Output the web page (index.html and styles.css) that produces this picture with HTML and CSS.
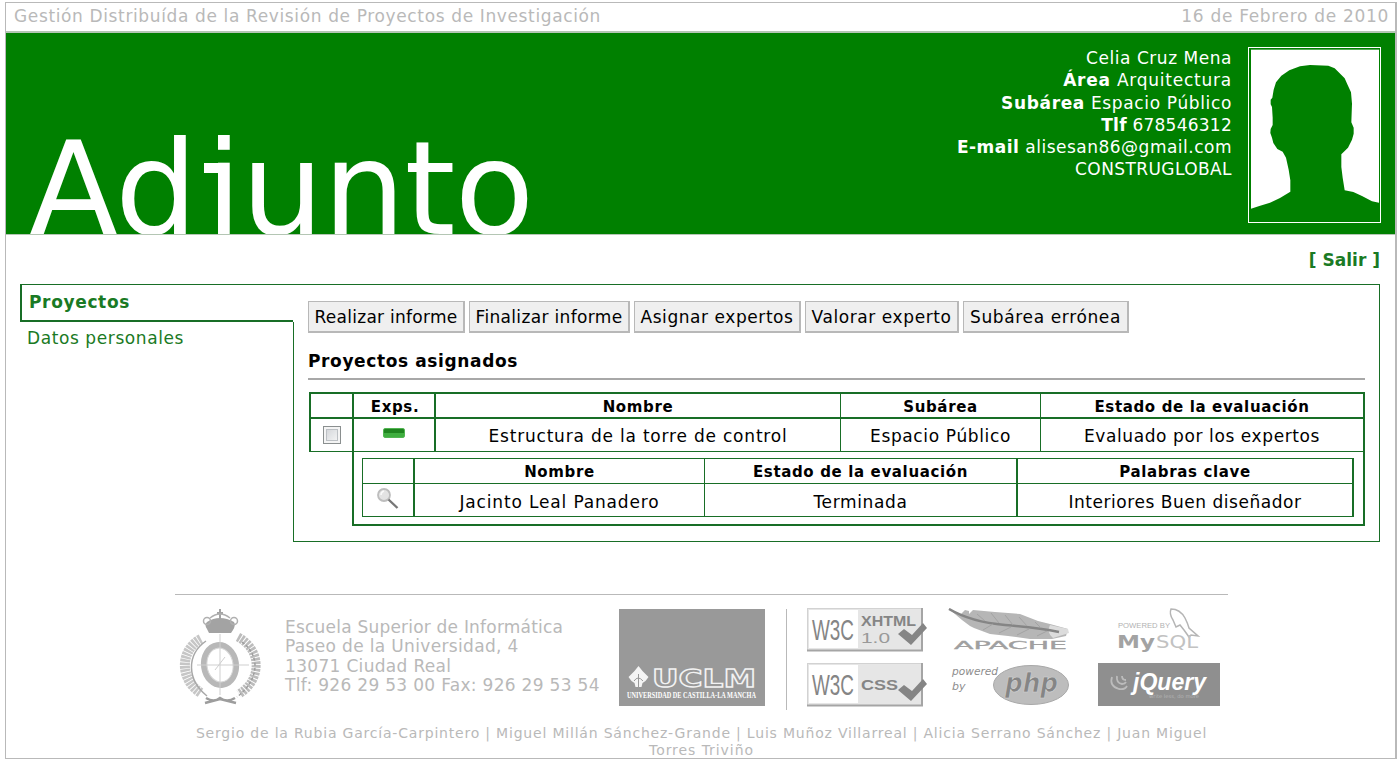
FILE: index.html
```html
<!DOCTYPE html>
<html lang="es">
<head>
<meta charset="utf-8">
<title>Gestión Distribuída de la Revisión de Proyectos de Investigación</title>
<link rel="stylesheet" href="styles.css">
</head>
<body>
<div class="frame">
  <div class="topbar"><span class="t-title">Gestión Distribuída de la Revisión de Proyectos de Investigación</span><span class="t-date">16 de Febrero de 2010</span></div>
  <header class="banner">
    <h1>Ad<span class="jota">j</span>unto</h1>
    <div class="user">
      <div class="u1">Celia Cruz Mena</div>
      <div class="u2"><b>Área</b> Arquitectura</div>
      <div class="u3"><b>Subárea</b> Espacio Público</div>
      <div class="u4"><b>Tlf</b> 678546312</div>
      <div class="u5"><b>E-mail</b> alisesan86@gmail.com</div>
      <div class="u6">CONSTRUGLOBAL</div>
    </div>
    <svg class="photo" viewBox="24 20 399 528" preserveAspectRatio="none">
      <rect x="33" y="28" width="384" height="518" fill="#fff"/>
      <path fill="#008000" d="M33 505 L58 497 90 487 120 473 151 454 151 420 146 388 138 352 128 334 112 326 100 308 96 292 91 278 92 266 98 254 98 232 96 200 92 192 92 178 97 172 101 148 108 126 124 106 148 90 180 78 210 74 265 76 284 84 302 102 314 114 322 132 333 156 336 190 334 246 341 262 341 280 336 298 324 322 304 342 304 380 308 412 314 450 340 455 366 467 396 483 417 487 V546 H33Z"/>
      <rect x="25.500" y="21.500" width="396" height="525" fill="none" stroke="#fff" stroke-width="3"/>
    </svg>
  </header>
  <div class="exit"><a>[ Salir ]</a></div>
  <div class="main">
    <nav class="menu">
      <div class="tab">Proyectos</div>
      <div class="item">Datos personales</div>
    </nav>
    <section class="panel">
      <div class="buttons">
        <button class="b1">Realizar informe</button>
        <button class="b2">Finalizar informe</button>
        <button class="b3">Asignar expertos</button>
        <button class="b4">Valorar experto</button>
        <button class="b5">Subárea errónea</button>
      </div>
      <h2>Proyectos asignados</h2>
      <div class="grid outer">
        <div class="th"></div><div class="th exps">Exps.</div><div class="th">Nombre</div><div class="th">Subárea</div><div class="th">Estado de la evaluación</div>
        <div class="td"><span class="check"></span></div>
        <div class="td"><span class="minus"></span></div>
        <div class="td c1">Estructura de la torre de control</div><div class="td c2">Espacio Público</div><div class="td c3">Evaluado por los expertos</div>
      </div>
      <div class="nested">
        <div class="grid inner">
          <div class="th"></div><div class="th">Nombre</div><div class="th">Estado de la evaluación</div><div class="th">Palabras clave</div>
          <div class="td"><svg class="lens" viewBox="0 0 24 24"><circle cx="8" cy="8" r="6" fill="#e3e3e3" stroke="#bdbdbd" stroke-width="1.800"/><path d="M5 8q0-3 3-4" stroke="#fafafa" stroke-width="1.500" fill="none"/><path d="M12.500 12.500L21.500 21" stroke="#777" stroke-width="2.400"/></svg></div>
          <div class="td c4">Jacinto Leal Panadero</div><div class="td c5">Terminada</div><div class="td c6">Interiores Buen diseñador</div>
        </div>
      </div>
    </section>
  </div>
  <footer class="footer">
    <div class="logos">
      <svg class="crest" viewBox="0 0 84 100">
        <g fill="#a3a3a3"><path d="M28 14q6-4 13-4t14 4q2 3-1 8l-2 3H30l-2-4q-3-4 0-7z"/><path d="M40 1h2v3h2v2h-2v5h-2V6h-2V4h2z"/></g>
        <g fill="none" stroke="#b0b0b0" stroke-width="1.500"><circle cx="28" cy="13" r="3.500"/><circle cx="55" cy="13" r="3.500"/><path d="M31 10q10-8 20 0"/></g>
        <path d="M22 31C1 42 0 71 22 85" stroke="#c6c6c6" stroke-width="10" stroke-dasharray="2.500 0.800" fill="none"/>
        <path d="M27 33C7 47 8 72 28 88" stroke="#a8a8a8" stroke-width="1.500" fill="none"/>
        <path d="M59 29C83 42 83 72 60 86" stroke="#bcbcbc" stroke-width="9" stroke-dasharray="2.500 1" fill="none"/>
        <path d="M63 34C82 48 80 72 58 89" stroke="#9e9e9e" stroke-width="1.500" stroke-dasharray="3 2" fill="none"/>
        <ellipse cx="41" cy="57" rx="16" ry="20" fill="none" stroke="#b8b8b8" stroke-width="6" transform="rotate(-8 41 57)"/>
        <ellipse cx="41" cy="57" rx="13" ry="17" fill="none" stroke="#d8d8d8" transform="rotate(-8 41 57)"/>
        <path d="M41 26V87M18 57H70M36 62l10-13" stroke="#cfcfcf" fill="none"/>
        <path d="M27 90q8 5 14 0q7 5 15 0M26 95l15-4 16 4" stroke="#9d9d9d" stroke-width="2.500" fill="none"/>
      </svg>
      <address>
        <div>Escuela Superior de Informática</div>
        <div class="a2">Paseo de la Universidad, 4</div>
        <div class="a3">13071 Ciudad Real</div>
        <div class="a4">Tlf: 926 29 53 00 Fax: 926 29 53 54</div>
      </address>
      <svg class="uclm" viewBox="0 0 146 97">
        <rect width="146" height="97" fill="#999"/>
        <path d="M19.500 57l4 5 6 6-3 4-3 2-1 4h-6l-1-4-3-2-3-4 6-6z" fill="#f4f4f4"/><path d="M19.500 65v13M15 72q4-6 9 0" stroke="#999" fill="none"/>
        <text x="33" y="78" textLength="104" lengthAdjust="spacingAndGlyphs" class="uclm-name">UCLM</text>
        <text x="8" y="89" textLength="129" lengthAdjust="spacingAndGlyphs" class="uclm-sub">UNIVERSIDAD DE CASTILLA-LA MANCHA</text>
      </svg>
      <div class="rule"></div>
      <svg class="badges" viewBox="0 0 420 100">
        <defs>
          <g id="w3c"><rect x="0.500" y="0.500" width="114" height="42" fill="#e6e6e6" stroke="#d2d2d2"/><rect x="2" y="2" width="49" height="38" fill="#fff"/><path d="M0 42.500H115V0" stroke="#a5a5a5" stroke-width="2" fill="none"/><text x="5" y="32" textLength="42" lengthAdjust="spacingAndGlyphs" class="w3">W3C</text></g>
          <path id="tick" d="M0 11l6-5 8 6L25 0l4 5-16 17z" fill="#858585"/>
        </defs>
        <use href="#w3c"/><text x="54" y="18" textLength="55" lengthAdjust="spacingAndGlyphs" class="bd">XHTML</text><text x="54" y="35" textLength="29" lengthAdjust="spacingAndGlyphs" class="bd light">1.0</text><use href="#tick" x="91" y="15"/>
        <use href="#w3c" y="55"/><text x="54" y="82" textLength="37" lengthAdjust="spacingAndGlyphs" class="bd">CSS</text><use href="#tick" x="91" y="71"/>
        <path d="M142 1l12 5 4-4 4 1 0 3 4-4 22 2 25 2 18 7 12 3 18 5-2 7-14 3-22 0-22-3-18-2-16-6-4-2-8-6z" fill="#b6b6b6"/>
        <path d="M243 17l18 4 1 4-16 5q-7-6-3-13z" fill="#dcdcdc"/>
        <path d="M142 1q22 13 56 16t54 7" stroke="#858585" stroke-width="2.500" fill="none"/>
        <path d="M170 6l8 7M184 5l8 10M198 7l8 10M212 9l8 9M228 14l6 6M176 22l10-6M192 25l12-6M210 27l12-6M230 28l10-5" stroke="#a3a3a3" fill="none"/>
        <text x="147" y="41" textLength="113" lengthAdjust="spacingAndGlyphs" class="apache">APACHE</text>
        <text x="145" y="67" textLength="46" lengthAdjust="spacingAndGlyphs" class="pow">powered</text><text x="145" y="82" class="pow">by</text>
        <ellipse cx="224" cy="77" rx="37.500" ry="19.500" fill="#bdbdbd" stroke="#a8a8a8"/>
        <text x="198" y="84" textLength="53" lengthAdjust="spacingAndGlyphs" class="php">php</text>
        <path d="M369 19l-3-7q-4-6-2-11q9 0 14 9q3 6 4 10l9 8-7-1-2 2-5-7-4-5z" fill="#fff" stroke="#b5b5b5" stroke-width="1.500"/>
        <text x="311" y="20" textLength="52" lengthAdjust="spacingAndGlyphs" class="mypow">POWERED BY</text>
        <text x="310" y="40" textLength="38" lengthAdjust="spacingAndGlyphs" class="mysql">My</text><text x="349" y="40" textLength="42" lengthAdjust="spacingAndGlyphs" class="mysql sql">SQL</text>
        <rect x="291" y="55" width="122" height="43" fill="#8f8f8f"/>
        <path d="M305 69q-3 9 7 12q6 1 8-3M310 68q-1 7 5 8q3 0 4-2M315 68q0 4 4 4" stroke="#bcbcbc" stroke-width="1.800" fill="none"/>
        <text x="326" y="82" textLength="73" lengthAdjust="spacingAndGlyphs" class="jq">jQuery</text>
        <text x="342" y="90" textLength="50" lengthAdjust="spacingAndGlyphs" class="jqs">write less, do more</text>
      </svg>
    </div>
    <div class="authors"><div>Sergio de la Rubia García-Carpintero | Miguel Millán Sánchez-Grande | Luis Muñoz Villarreal | Alicia Serrano Sánchez | Juan Miguel</div><div class="f2">Torres Triviño</div></div>
  </footer>
</div>
</body>
</html>
```

FILE: styles.css
```css
* { box-sizing: border-box; }
body { margin: 0; padding: 2px 1px 0 5px; background: #fff; color: #000; font: 17px/22px "DejaVu Sans", Verdana, sans-serif; }
.frame { width: 1392px; height: 757px; border: 1px solid #b9b9b9; border-right-width: 2px; }

/* Top bar and banner */
.topbar { display: flex; justify-content: space-between; height: 30px; padding: 2px 6px 0 8px; border-bottom: 2px solid #b4c6b4; color: #b9b9b9; white-space: nowrap; }
.t-title { letter-spacing: 0.632px; }
.t-date { letter-spacing: 0.690px; }
.banner { display: flex; align-items: flex-start; height: 202px; padding: 14px 14px 0 0; background: #008000; color: #fff; border-bottom: 1px solid #b4c6b4; }
.banner h1 { flex: none; width: 560px; height: 187px; margin: 0; padding: 41px 0 0 23px; overflow: hidden; font-size: 130px; font-weight: 400; line-height: 202px; letter-spacing: -0.700px; }
.jota { position: relative; margin-left: 9px; }
.jota::before { content: ""; position: absolute; left: -2px; top: 50px; width: 15px; height: 10px; background: #fff; }
.user { flex: 1; padding-right: 16px; text-align: right; white-space: nowrap; line-height: 22.300px; }
.u1 { letter-spacing: 0.534px; }
.u2 { letter-spacing: 0.762px; }
.u3 { letter-spacing: 0.641px; }
.u4 { letter-spacing: 0.246px; }
.u5 { letter-spacing: 0.495px; }
.u6 { letter-spacing: 0.409px; }
.photo { flex: none; width: 133px; height: 176px; display: block; }
.exit { height: 49px; padding: 14px 15px 0 0; text-align: right; font-weight: 700; color: #1a7a24; }

/* Menu and panel */
.main { display: flex; height: 258px; margin: 0 15px 0 14px; }
.menu { flex: none; width: 273px; color: #1a7a24; }
.tab { height: 38px; padding: 6px 0 0 7px; border: solid #186e26; border-width: 1px 0 2px 2px; font-weight: 700; letter-spacing: 0.651px; }
.item { padding: 5px 0 0 7px; letter-spacing: 0.589px; }
.panel { flex: 1; position: relative; padding: 16px 14px 0 15px; border: solid #186e26; border-width: 1px 1px 1px 0; }
.panel::before { content: ""; position: absolute; left: 0; top: 37px; bottom: 0; width: 1px; background: #186e26; }
.buttons { display: flex; gap: 4px; height: 32px; }
.buttons button { padding: 0; height: 32px; border: solid #b8b8b8; border-width: 1px 2px 2px 1px; background: #efefef; font: inherit; color: #000; white-space: nowrap; }
.buttons .b1 { width: 157px; letter-spacing: 0.269px; }
.buttons .b2 { width: 161px; letter-spacing: 0.339px; }
.buttons .b3 { width: 167px; letter-spacing: 0.564px; }
.buttons .b4 { width: 154px; letter-spacing: 0.588px; }
.buttons .b5 { width: 166px; letter-spacing: 0.633px; }
h2 { height: 30px; margin: 17px 0 12px; border-bottom: 2px solid #a8a8a8; font-size: 17px; line-height: 22px; letter-spacing: 0.622px; }

/* Tables */
.grid { display: grid; }
.grid > div { display: flex; align-items: center; justify-content: center; border: 0 solid #186e26; border-right-width: 1px; border-bottom-width: 1px; white-space: nowrap; }
.grid > .th { font-size: 15px; font-weight: 700; letter-spacing: 0.640px; padding-top: 1px; }
.grid > .td { padding-top: 2px; }
.outer { grid-template-columns: 43px 82px 405px 200px 324px; grid-template-rows: 25px 33px; width: 1056px; margin-left: 1px; border: solid #186e26; border-width: 2px 0 0 2px; }
.outer > .th { border-bottom-width: 2px; padding-top: 3px; }
.outer > .exps { padding-left: 2px; }
.outer > div:nth-child(5n+1), .outer > div:nth-child(5n+2), .outer > div:nth-child(5n) { border-right-width: 2px; }
.nested { width: 1013px; height: 74px; margin-left: 44px; padding: 6px 0 0 8px; border: solid #186e26; border-width: 0 2px 2px 2px; }
.inner { grid-template-columns: 52px 290px 313px 336px; grid-template-rows: 25px 33px; width: 992px; border: solid #186e26; border-width: 1px 0 0 1px; }
.inner > .td { padding-top: 3px; }
.inner > div:nth-child(4n+1), .inner > div:nth-child(4n+3), .inner > div:nth-child(4n) { border-right-width: 2px; }
.grid > .c1 { letter-spacing: 0.799px; }
.grid > .c2 { letter-spacing: 0.640px; }
.grid > .c3 { letter-spacing: 0.596px; }
.grid > .c4 { letter-spacing: 0.843px; }
.grid > .c5 { letter-spacing: 0.628px; }
.grid > .c6 { letter-spacing: 0.534px; }
.check { width: 18px; height: 18px; margin-top: -2px; border: 1px solid #8a8f8f; background: linear-gradient(135deg, #cdd0d4, #fafafa); box-shadow: inset 0 0 0 2px #f4f4f4, inset 0 0 0 3px #bcc0c4; }
.minus { width: 22px; height: 10px; margin-top: -7px; border: 1px solid #52b552; border-radius: 2px; background: linear-gradient(#1f841f 45%, #3fae3f 55%); }
.lens { width: 24px; height: 24px; margin-top: -6px; }

/* Footer */
.footer { width: 1053px; margin: 52px 0 0 169px; border-top: 1px solid #b9b9b9; color: #b9b9b9; }
.logos { display: flex; height: 128px; padding-top: 13px; }
.logos svg { display: block; flex: none; }
.crest { width: 84px; height: 100px; margin-left: 4px; }
address { flex: none; width: 356px; padding: 10px 0 0 22px; font-style: normal; line-height: 19.400px; white-space: nowrap; letter-spacing: 0.210px; }
.a2 { letter-spacing: 0.340px; }
.a3 { letter-spacing: 0.320px; }
.a4 { letter-spacing: 0.310px; }
.uclm { width: 146px; height: 97px; margin-top: 1px; }
.rule { flex: none; width: 1px; height: 101px; margin: 1px 20px 0 21px; background: #b9b9b9; }
.badges { width: 420px; height: 100px; }
.authors { padding-top: 2px; font-size: 14px; line-height: 16.500px; text-align: center; white-space: nowrap; letter-spacing: 0.800px; }
.f2 { letter-spacing: 0.940px; }
text { font-family: "DejaVu Sans", sans-serif; letter-spacing: 0; }
.uclm-name { font-size: 25px; font-weight: 700; fill: #999; stroke: #f2f2f2; stroke-width: 1.300px; }
.uclm-sub { font-family: "Liberation Serif", serif; font-size: 8px; font-weight: 700; fill: #fff; }
.w3 { font-family: "Liberation Sans", sans-serif; font-size: 30px; fill: #858585; }
.bd { font-family: "Liberation Sans", sans-serif; font-size: 15px; font-weight: 700; fill: #858585; }
.light { font-weight: 400; fill: #999; }
.apache { font-size: 10px; fill: #a0a0a0; stroke: #a0a0a0; stroke-width: 0.300px; }
.pow { font-size: 11px; font-style: italic; fill: #8d8d8d; }
.php { font-size: 27px; font-weight: 700; font-style: italic; fill: #858585; stroke: #d5d5d5; stroke-width: 0.600px; }
.mypow { font-family: "Liberation Sans", sans-serif; font-size: 8px; fill: #b2b2b2; }
.mysql { font-size: 18px; font-weight: 700; fill: #a3a3a3; }
.sql { font-weight: 400; fill: #c2c2c2; }
.jq { font-family: "Liberation Sans", sans-serif; font-size: 23px; font-weight: 700; font-style: italic; fill: #fff; }
.jqs { font-size: 5px; fill: #b5b5b5; }
```
